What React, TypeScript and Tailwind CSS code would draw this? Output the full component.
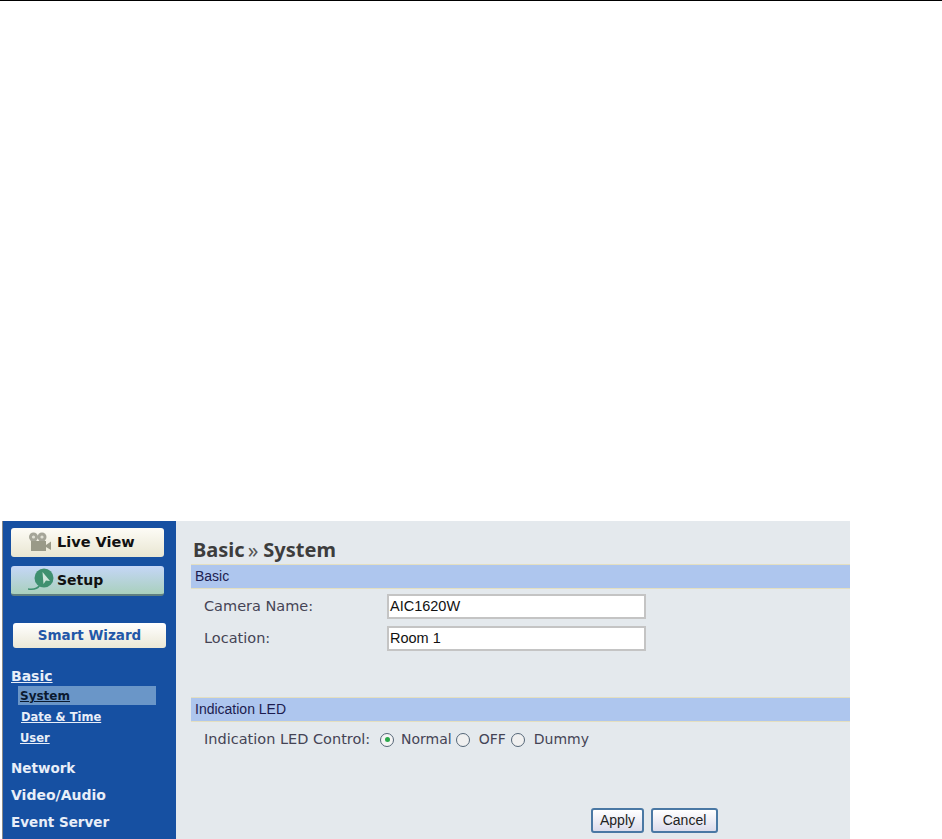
export default function App() {
  return (
    <div className="w-[942px] h-[839px] bg-white overflow-hidden flex flex-col" style={{ fontFamily: '"DejaVu Sans", sans-serif' }}>
      <div className="h-px bg-black shrink-0" />
      <div className="mt-[520px] flex h-[318px] w-[850px]">
        <div className="w-[3px] flex">
          <div className="w-[2px] bg-white" />
          <div className="w-px bg-[#8a8a8a]" />
        </div>
        <aside className="w-[173px] bg-[#1650a2] flex flex-col">
          <div className="ml-[8px] mt-[7px] w-[153px] h-[29px] rounded-[3px] bg-gradient-to-b from-[#fdfcf6] to-[#e9e6d2] flex items-center pl-[17px] gap-[5px] text-[14.5px] font-bold text-[#111]">
            <svg width="24" height="20" viewBox="0 0 24 20" className="mt-[-1px]">
              <circle cx="5.5" cy="5" r="4.5" fill="#a5a598" />
              <circle cx="14" cy="5" r="4.5" fill="#a5a598" />
              <circle cx="5.5" cy="5" r="1.6" fill="#e0e0d4" />
              <circle cx="14" cy="5" r="1.6" fill="#e0e0d4" />
              <rect x="3" y="9" width="15" height="10" fill="#9a9a88" />
              <path d="M18 13 L23 9.5 V18 L18 15 Z" fill="#9a9a88" />
            </svg>
            <span>Live View</span>
          </div>
          <div className="ml-[8px] mt-[9px] w-[153px] h-[30px] rounded-[3px] bg-gradient-to-b from-[#c5d6f7] to-[#a9d0bd] border-b-2 border-[#5f7f80] flex items-center pl-[17px] gap-[3px] text-[14px] font-bold text-[#111]">
            <svg width="26" height="24" viewBox="0 0 26 24">
              <circle cx="16" cy="10" r="9.5" fill="#3f9070" />
              <path d="M14.5 4 L15.5 16 L18 12.5 L22 13 Z" fill="#cfe6dc" />
              <path d="M0 21 C6 22 10 20 12 17" stroke="#3f9070" strokeWidth="1.6" fill="none" />
            </svg>
            <span>Setup</span>
          </div>
          <div className="ml-[10px] mt-[27px] w-[153px] h-[25px] rounded-[3px] bg-gradient-to-b from-white to-[#ebe8d6] flex items-center justify-center text-[13.5px] font-bold text-[#2257a8]">
            Smart Wizard
          </div>
          <a className="ml-[8px] mt-[20px] w-fit text-[14px] leading-[17px] font-bold text-[#e8eef8] underline">Basic</a>
          <div className="ml-[15px] mt-[1px] w-[138px] h-[19px] bg-[#6a96c8] pl-[2px] text-[12px] leading-[20px] font-bold text-[#0a1a30] underline">System</div>
          <a className="ml-[18px] mt-[2px] w-fit text-[11.5px] leading-[20px] font-bold text-[#e8eef8] underline">Date &amp; Time</a>
          <a className="ml-[17px] mt-[1px] w-fit text-[11.5px] leading-[20px] font-bold text-[#e8eef8] underline">User</a>
          <div className="ml-[8px] mt-[12px] text-[13.5px] leading-[17px] font-bold text-[#e8eef8]">Network</div>
          <div className="ml-[8px] mt-[10px] text-[14px] leading-[17px] font-bold text-[#e8eef8]">Video/Audio</div>
          <div className="ml-[8px] mt-[10px] text-[13.5px] leading-[17px] font-bold text-[#e8eef8]">Event Server</div>
        </aside>
        <main className="flex-1 bg-[#e4e9ed] flex flex-col">
          <h1 className="ml-[17px] mt-[19px] h-[20px] text-[20px] leading-[20px] font-bold text-[#3d3d3d] flex items-center" style={{ fontFamily: '"Noto Sans", sans-serif' }}>
            <span>Basic</span>
            <span className="ml-[3px] mr-[5px] font-normal text-[21px] text-[#555]">»</span>
            <span>System</span>
          </h1>
          <div className="ml-[15px] mt-[4px] h-[25px] bg-[#aec6ee] border-y border-[#e4dfc0] pl-[4px] text-[14px] leading-[22px] text-[#1c1c50]" style={{ fontFamily: '"Liberation Sans", sans-serif' }}>
            Basic
          </div>
          <div className="flex items-center mt-[5px] h-[25px]">
            <span className="ml-[28px] w-[183px] text-[14.5px] text-[#444455]">Camera Name:</span>
            <div className="w-[259px] h-[25px] bg-white border-2 border-[#c4c4c4] pl-px text-[14.5px] leading-[21px] text-[#111]" style={{ fontFamily: '"Liberation Sans", sans-serif' }}>AIC1620W</div>
          </div>
          <div className="flex items-center mt-[7px] h-[25px]">
            <span className="ml-[28px] w-[183px] text-[14.5px] text-[#444455]">Location:</span>
            <div className="w-[259px] h-[25px] bg-white border-2 border-[#c4c4c4] pl-px text-[14.5px] leading-[21px] text-[#111]" style={{ fontFamily: '"Liberation Sans", sans-serif' }}>Room 1</div>
          </div>
          <div className="ml-[15px] mt-[46px] h-[25px] bg-[#aec6ee] border-y border-[#e4dfc0] pl-[4px] text-[14px] leading-[22px] text-[#1c1c50]" style={{ fontFamily: '"Liberation Sans", sans-serif' }}>
            Indication LED
          </div>
          <div className="flex items-center ml-[28px] mt-[5px] h-[25px] text-[14.5px] text-[#444455]">
            <span className="w-[175px] whitespace-nowrap">Indication LED Control:</span>
            <span className="ml-px w-[14px] h-[14px] rounded-full border border-[#556677] bg-[#f4f4f4] flex items-center justify-center">
              <span className="w-[5px] h-[5px] rounded-full bg-[#2aa84a]" />
            </span>
            <span className="ml-[7px] text-[14px]">Normal</span>
            <span className="ml-[4px] w-[14px] h-[14px] rounded-full border border-[#556677] bg-[#f0f0f0]" />
            <span className="ml-[9px] text-[14px]">OFF</span>
            <span className="ml-[5px] w-[14px] h-[14px] rounded-full border border-[#556677] bg-[#f0f0f0]" />
            <span className="ml-[9px] text-[14px]">Dummy</span>
          </div>
          <div className="flex ml-[415px] mt-[56px] gap-[7px] text-[14px] text-[#222]" style={{ fontFamily: '"Liberation Sans", sans-serif' }}>
            <div className="w-[53px] h-[25px] rounded-[3px] border-2 border-[#4a78a4] bg-gradient-to-b from-white to-[#dcdcec] flex items-center justify-center">Apply</div>
            <div className="w-[67px] h-[25px] rounded-[3px] border-2 border-[#4a78a4] bg-gradient-to-b from-white to-[#dcdcec] flex items-center justify-center">Cancel</div>
          </div>
        </main>
      </div>
    </div>
  );
}
